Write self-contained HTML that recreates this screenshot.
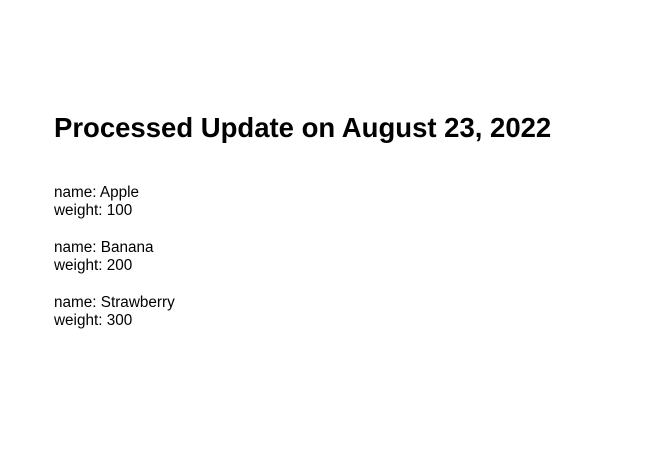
<!DOCTYPE html>
<html><head><style>
body{margin:0;background:#fff;font-family:"Liberation Sans",Arial,sans-serif;color:#000;}
h1{position:absolute;left:54px;top:112px;margin:0;font-size:27.5px;font-weight:bold;line-height:32px;white-space:nowrap;}
.item{position:absolute;left:54px;font-size:15.3px;line-height:18px;white-space:nowrap;}
</style></head><body>
<h1>Processed Update on August 23, 2022</h1>
<div class="item" style="top:184px">name: Apple<br>weight: 100</div>
<div class="item" style="top:239px">name: Banana<br>weight: 200</div>
<div class="item" style="top:294px">name: Strawberry<br>weight: 300</div>
</body></html>
